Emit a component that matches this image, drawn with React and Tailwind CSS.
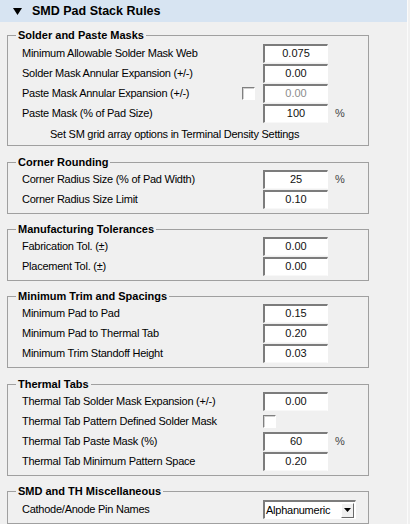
import React from 'react';

const NumBox = ({ value, disabled }) => (
  <div
    className={`flex h-[19px] w-[65px] items-center justify-center border-t-2 border-l-2 border-r border-b border-t-[#7c7c7c] border-l-[#7c7c7c] border-r-white border-b-[#f8f8f8] bg-white text-[11px] ${
      disabled ? 'text-[#8d8d8d]' : 'text-[#111]'
    }`}
  >
    {value}
  </div>
);

const Check = () => (
  <div className="h-[13px] w-[13px] border-t border-l border-r border-b border-t-[#808080] border-l-[#808080] border-r-white border-b-white bg-white shadow-[inset_1px_1px_0_#d0d0d0]" />
);

const Row = ({ label, value, check, boxCheck, pct, disabled }) => (
  <div className="flex h-[20px] items-center">
    <div className="w-[234px] shrink-0 pl-[14px] tracking-[-0.25px] whitespace-nowrap">{label}</div>
    <div className="flex w-[21px] shrink-0 items-center">{check && <Check />}</div>
    {boxCheck ? (
      <div className="flex w-[65px] items-center">
        <Check />
      </div>
    ) : (
      <NumBox value={value} disabled={disabled} />
    )}
    {pct && <span className="ml-[7px] text-[#444]">%</span>}
  </div>
);

const Group = ({ title, children, className = '' }) => (
  <fieldset className={`ml-[7px] w-[362px] border border-[#a0a0a0] pb-[4px] ${className}`}>
    <legend className="ml-[8px] px-[2px] text-[11px] leading-[14px] font-bold">{title}</legend>
    {children}
  </fieldset>
);

export default function App() {
  return (
    <div
      className="h-[524px] w-[410px] overflow-hidden bg-[#f0f0f0] text-[11px] text-black"
      style={{ fontFamily: '"Liberation Sans", Arial, sans-serif' }}
    >
      <div className="h-full w-[408px] border-r border-[#fbfbfb]">
        {/* header */}
        <div className="flex h-[22px] items-center bg-[#d7e4f2]">
          <svg width="9" height="7" viewBox="0 0 9 7" className="ml-[13px]">
            <polygon points="0,0 9,0 4.5,7" fill="#000" />
          </svg>
          <span className="ml-[10px] text-[12.5px] font-bold">SMD Pad Stack Rules</span>
        </div>

        <Group title="Solder and Paste Masks" className="mt-[6px]">
          <div className="pt-[1px]">
            <Row label="Minimum Allowable Solder Mask Web" value="0.075" />
            <Row label="Solder Mask Annular Expansion (+/-)" value="0.00" />
            <Row label="Paste Mask Annular Expansion (+/-)" value="0.00" check disabled />
            <Row label="Paste Mask (% of Pad Size)" value="100" pct />
          </div>
          <div className="mt-[4px] pl-[42px] leading-[14px] tracking-[-0.25px]">
            Set SM grid array options in Terminal Density Settings
          </div>
        </Group>

        <Group title="Corner Rounding" className="mt-[9px]">
          <Row label="Corner Radius Size (% of Pad Width)" value="25" pct />
          <Row label="Corner Radius Size Limit" value="0.10" />
        </Group>

        <Group title="Manufacturing Tolerances" className="mt-[8px]">
          <Row label="Fabrication Tol. (±)" value="0.00" />
          <Row label="Placement Tol. (±)" value="0.00" />
        </Group>

        <Group title="Minimum Trim and Spacings" className="mt-[8px]">
          <Row label="Minimum Pad to Pad" value="0.15" />
          <Row label="Minimum Pad to Thermal Tab" value="0.20" />
          <Row label="Minimum Trim Standoff Height" value="0.03" />
        </Group>

        <Group title="Thermal Tabs" className="mt-[9px]">
          <Row label="Thermal Tab Solder Mask Expansion (+/-)" value="0.00" />
          <Row label="Thermal Tab Pattern Defined Solder Mask" boxCheck />
          <Row label="Thermal Tab Paste Mask (%)" value="60" pct />
          <Row label="Thermal Tab Minimum Pattern Space" value="0.20" />
        </Group>

        <Group title="SMD and TH Miscellaneous" className="mt-[8px]">
          <div className="flex h-[21px] items-center pt-[2px]">
            <div className="w-[255px] shrink-0 pl-[14px] tracking-[-0.25px]">Cathode/Anode Pin Names</div>
            <div className="flex h-[19px] w-[93px] items-center border-t-2 border-l-2 border-r border-b border-t-[#7c7c7c] border-l-[#7c7c7c] border-r-white border-b-white bg-white">
              <span className="flex-1 pl-[1px] tracking-[-0.25px]">Alphanumeric</span>
              <div className="mr-[1px] flex h-[15px] w-[13px] items-center justify-center border border-t-white border-l-white border-r-[#696969] border-b-[#696969] bg-[#f0f0f0]">
                <svg width="7" height="4" viewBox="0 0 7 4">
                  <polygon points="0,0 7,0 3.5,4" fill="#000" />
                </svg>
              </div>
            </div>
          </div>
        </Group>
      </div>
    </div>
  );
}
